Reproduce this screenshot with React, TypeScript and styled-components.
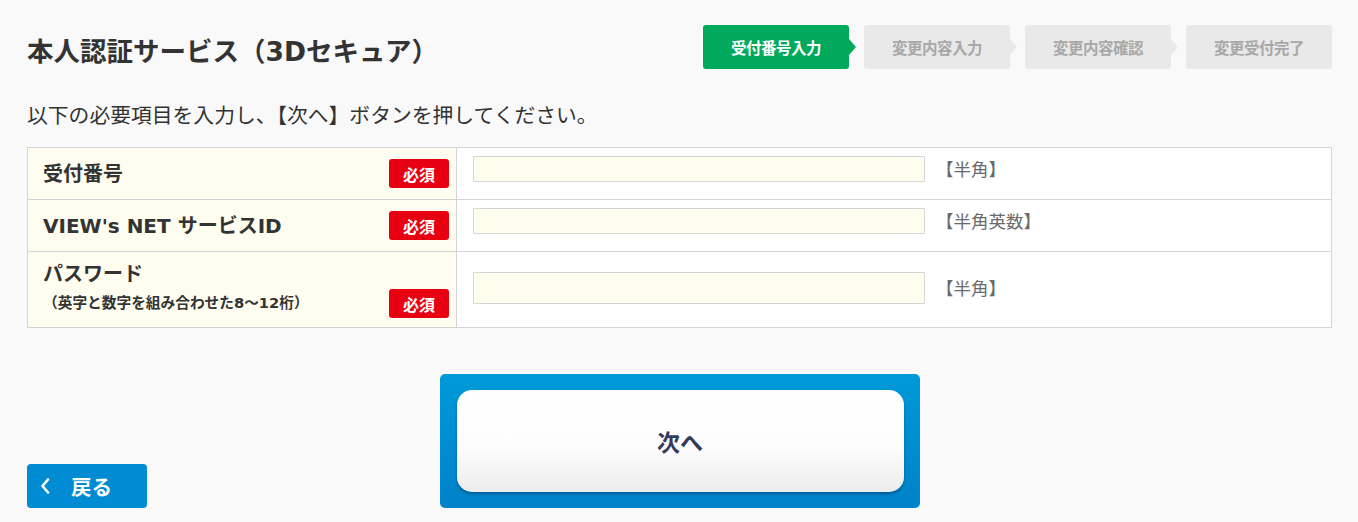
import React from "react";
import styled, { createGlobalStyle } from "styled-components";

const GlobalStyle = createGlobalStyle`
  html, body { margin: 0; padding: 0; background: #f9f9f9; }
  body { font-family: "Noto Sans CJK JP", "Noto Sans", sans-serif; color: #333; }
  * { box-sizing: border-box; }
`;

const Page = styled.div`
  padding: 25px 26px 0 27px;
  width: 1358px;
`;

const Header = styled.div`
  display: flex;
  justify-content: space-between;
  align-items: flex-start;
`;

const Title = styled.h1`
  margin: 9px 0 0 0;
  font-family: "DejaVu Sans", "Noto Sans CJK JP", sans-serif;
  font-size: 26.5px;
  line-height: 36px;
  font-weight: 700;
  color: #333;
`;

const Steps = styled.ol`
  display: flex;
  gap: 15px;
  margin: 0;
  padding: 0;
  list-style: none;
`;

const Step = styled.li<{ $active?: boolean; $last?: boolean }>`
  position: relative;
  width: 146px;
  height: 44px;
  border-radius: 3px;
  display: flex;
  align-items: center;
  justify-content: center;
  font-size: 15.5px;
  font-weight: 700;
  letter-spacing: -0.5px;
  background: ${(p) => (p.$active ? "#00a95c" : "#e9e9e9")};
  color: ${(p) => (p.$active ? "#fff" : "#a8a8a8")};
  &::after {
    content: "";
    display: ${(p) => (p.$last ? "none" : "block")};
    position: absolute;
    right: -7px;
    top: 50%;
    margin-top: -8px;
    border-top: 8px solid transparent;
    border-bottom: 8px solid transparent;
    border-left: 7px solid ${(p) => (p.$active ? "#00a95c" : "#e9e9e9")};
  }
`;

const Lead = styled.p`
  margin: 30px 0 19px 0;
  font-size: 20.8px;
  line-height: 28px;
  color: #333;
`;

const Table = styled.div`
  border: 1px solid #d6d6d6;
  background: #fff;
`;

const Row = styled.div<{ $height: number }>`
  display: grid;
  grid-template-columns: 429px 1fr;
  min-height: ${(p) => p.$height}px;
  & + & {
    border-top: 1px solid #d6d6d6;
  }
`;

const LabelCell = styled.div<{ $tall?: boolean }>`
  background: #fffdf0;
  border-right: 1px solid #d6d6d6;
  display: flex;
  justify-content: space-between;
  align-items: ${(p) => (p.$tall ? "flex-end" : "center")};
  padding: ${(p) => (p.$tall ? "6px 7px 9px 15px" : "0 7px 0 15px")};
`;

const LabelText = styled.div`
  display: flex;
  flex-direction: column;
  align-self: stretch;
  justify-content: center;
`;

const LabelMain = styled.span`
  font-family: "DejaVu Sans", "Noto Sans CJK JP", sans-serif;
  font-size: 20px;
  font-weight: 700;
  line-height: 26px;
  color: #333;
`;

const LabelSub = styled.span`
  font-family: "DejaVu Sans", "Noto Sans CJK JP", sans-serif;
  font-size: 14.7px;
  font-weight: 700;
  line-height: 24px;
  color: #333;
  margin-top: 4px;
`;

const Badge = styled.span`
  width: 60px;
  height: 29px;
  border-radius: 3px;
  background: #e60012;
  color: #fff;
  font-size: 16px;
  font-weight: 700;
  display: flex;
  align-items: center;
  justify-content: center;
  flex-shrink: 0;
`;

const ValueCell = styled.div<{ $tall?: boolean }>`
  display: flex;
  align-items: ${(p) => (p.$tall ? "center" : "flex-start")};
  padding: ${(p) => (p.$tall ? "0 0 3px 16px" : "8px 0 0 16px")};
`;

const Input = styled.input<{ $tall?: boolean }>`
  width: 452px;
  height: ${(p) => (p.$tall ? 32 : 26)}px;
  background: #fffdee;
  border: 1px solid #d6d6d6;
  border-radius: 1px;
  padding: 0 6px;
  font-family: inherit;
  font-size: 15px;
  outline: none;
`;

const Hint = styled.span`
  margin-left: 11px;
  font-size: 17.5px;
  line-height: 26px;
  color: #6a6a6a;
`;

const Footer = styled.div`
  display: grid;
  grid-template-columns: 1fr auto 1fr;
  align-items: end;
  margin-top: 46px;
`;

const BackButton = styled.button`
  justify-self: start;
  width: 120px;
  height: 44px;
  border: none;
  border-radius: 4px;
  background: #008bd2;
  color: #fff;
  font-family: inherit;
  font-size: 20.5px;
  font-weight: 700;
  display: flex;
  align-items: center;
  gap: 21px;
  padding: 0 0 0 13px;
  cursor: pointer;
`;

const NextFrame = styled.div`
  width: 480px;
  height: 134px;
  border-radius: 5px;
  background: linear-gradient(#009ad8, #0082c8);
  padding: 16px 16px 16px 17px;
`;

const NextButton = styled.button`
  width: 100%;
  height: 100%;
  border: none;
  border-radius: 15px;
  background: linear-gradient(#ffffff 0%, #fdfdfd 55%, #ececec 100%);
  box-shadow: 0 2px 3px rgba(0, 40, 90, 0.45);
  color: #353a5c;
  font-family: inherit;
  font-size: 23px;
  font-weight: 700;
  cursor: pointer;
`;

const Chevron = () => (
  <svg width="10" height="18" viewBox="0 0 10 18" aria-hidden="true">
    <polyline points="8,2.5 2.5,9 8,15.5" fill="none" stroke="#fff" strokeWidth="2.6" strokeLinecap="round" strokeLinejoin="round" />
  </svg>
);

const steps = ["受付番号入力", "変更内容入力", "変更内容確認", "変更受付完了"];

const rows = [
  { label: "受付番号", hint: "【半角】", height: 51 },
  { label: "VIEW's NET サービスID", hint: "【半角英数】", height: 52 },
  { label: "パスワード", sub: "（英字と数字を組み合わせた8〜12桁）", hint: "【半角】", height: 76, tall: true, type: "password" },
];

export default function App() {
  return (
    <>
      <GlobalStyle />
      <Page>
        <Header>
          <Title>本人認証サービス（3Dセキュア）</Title>
          <Steps>
            {steps.map((s, i) => (
              <Step key={s} $active={i === 0} $last={i === steps.length - 1}>
                {s}
              </Step>
            ))}
          </Steps>
        </Header>
        <Lead>以下の必要項目を入力し、【次へ】ボタンを押してください。</Lead>
        <Table>
          {rows.map((r) => (
            <Row key={r.label} $height={r.height}>
              <LabelCell $tall={r.tall}>
                <LabelText>
                  <LabelMain>{r.label}</LabelMain>
                  {r.sub && <LabelSub>{r.sub}</LabelSub>}
                </LabelText>
                <Badge>必須</Badge>
              </LabelCell>
              <ValueCell $tall={r.tall}>
                <Input $tall={r.tall} type={r.type || "text"} />
                <Hint>{r.hint}</Hint>
              </ValueCell>
            </Row>
          ))}
        </Table>
        <Footer>
          <BackButton>
            <Chevron />
            戻る
          </BackButton>
          <NextFrame>
            <NextButton>次へ</NextButton>
          </NextFrame>
          <div />
        </Footer>
      </Page>
    </>
  );
}
